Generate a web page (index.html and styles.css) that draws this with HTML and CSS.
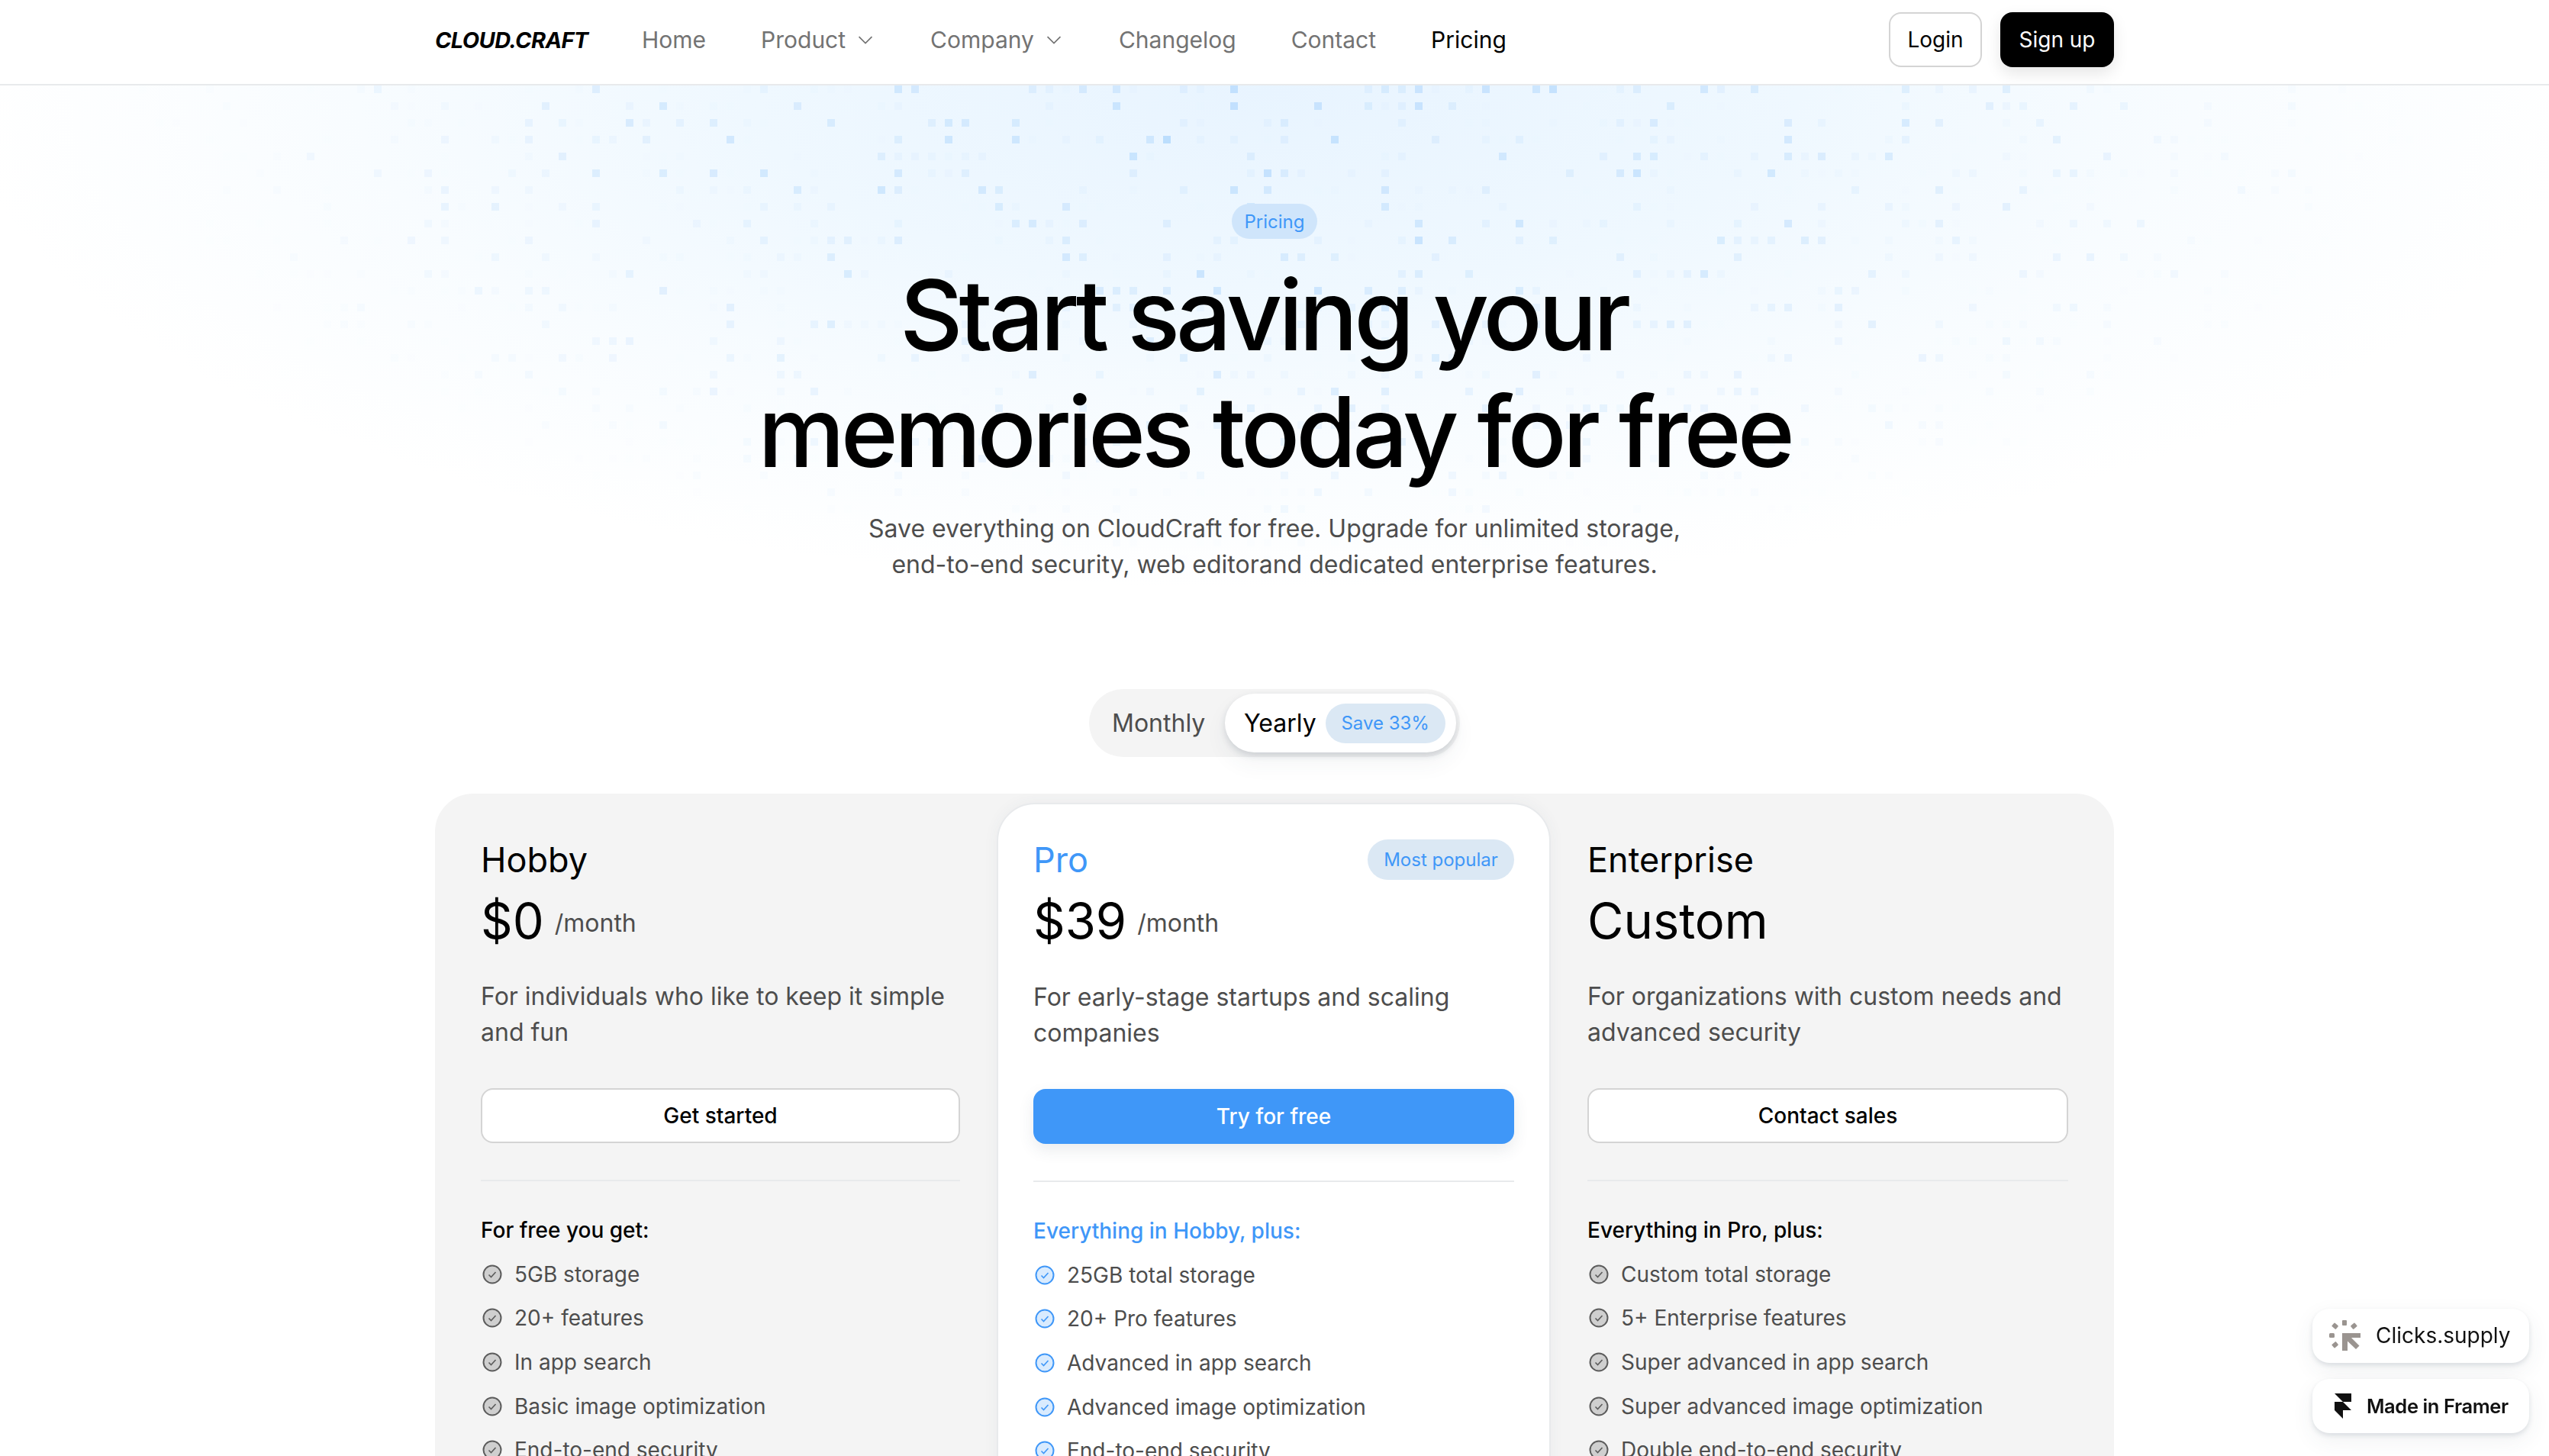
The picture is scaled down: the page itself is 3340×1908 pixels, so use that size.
FILE: index.html
```html
<!DOCTYPE html>
<html lang="en">
<head>
    <meta charset="UTF-8">
    <meta name="viewport" content="width=device-width, initial-scale=1.0">
    <title>CloudCraft Pricing</title>
    <link rel="stylesheet" href="styles.css">
</head>
<body>
    <header class="site-header">
        <div class="header-inner">
            <a href="#" class="logo">CLOUD.CRAFT</a>
            <nav class="nav-list">
                <a href="#">Home</a>
                <a href="#">Product <svg class="chev" viewBox="0 0 20 20"><path d="M3.500 7l6.500 6.500L16.500 7"/></svg></a>
                <a href="#">Company <svg class="chev" viewBox="0 0 20 20"><path d="M3.500 7l6.500 6.500L16.500 7"/></svg></a>
                <a href="#">Changelog</a>
                <a href="#">Contact</a>
                <a href="#" class="active">Pricing</a>
            </nav>
            <div class="auth-buttons">
                <button class="login-btn">Login</button>
                <button class="signup-btn">Sign up</button>
            </div>
        </div>
    </header>

    <main>
        <section class="hero">
            <div class="hero-dots"></div>
            <span class="pill hero-pill">Pricing</span>
            <h1>Start saving your <br>memories today for free</h1>
            <p>Save everything on CloudCraft for free. Upgrade for unlimited storage,<br>end-to-end security, web editorand dedicated enterprise features.</p>
            <div class="toggle">
                <span class="toggle-off">Monthly</span>
                <span class="toggle-on">Yearly <span class="pill save-pill">Save 33%</span></span>
            </div>
        </section>

        <section class="plans">
            <article class="plan plan-hobby">
                <h2>Hobby</h2>
                <div class="price"><strong>$0</strong> <span>/month</span></div>
                <p class="desc">For individuals who like to keep it simple and fun</p>
                <button class="plan-btn">Get started</button>
                <hr>
                <h3>For free you get:</h3>
                <ul>
                    <li><svg class="check" viewBox="0 0 26 26"><circle cx="13" cy="13" r="11.5"/><path d="M8.500 13.500l3 3 6-6.500"/></svg>5GB storage</li>
                    <li><svg class="check" viewBox="0 0 26 26"><circle cx="13" cy="13" r="11.5"/><path d="M8.500 13.500l3 3 6-6.500"/></svg>20+ features</li>
                    <li><svg class="check" viewBox="0 0 26 26"><circle cx="13" cy="13" r="11.5"/><path d="M8.500 13.500l3 3 6-6.500"/></svg>In app search</li>
                    <li><svg class="check" viewBox="0 0 26 26"><circle cx="13" cy="13" r="11.5"/><path d="M8.500 13.500l3 3 6-6.500"/></svg>Basic image optimization</li>
                    <li><svg class="check" viewBox="0 0 26 26"><circle cx="13" cy="13" r="11.5"/><path d="M8.500 13.500l3 3 6-6.500"/></svg>End-to-end security</li>
                </ul>
            </article>

            <article class="plan plan-pro">
                <div class="plan-top">
                    <h2>Pro</h2>
                    <span class="pill popular-pill">Most popular</span>
                </div>
                <div class="price"><strong>$39</strong> <span>/month</span></div>
                <p class="desc">For early-stage startups and scaling companies</p>
                <button class="plan-btn">Try for free</button>
                <hr>
                <h3>Everything in Hobby, plus:</h3>
                <ul>
                    <li><svg class="check" viewBox="0 0 26 26"><circle cx="13" cy="13" r="11.5"/><path d="M8.500 13.500l3 3 6-6.500"/></svg>25GB total storage</li>
                    <li><svg class="check" viewBox="0 0 26 26"><circle cx="13" cy="13" r="11.5"/><path d="M8.500 13.500l3 3 6-6.500"/></svg>20+ Pro features</li>
                    <li><svg class="check" viewBox="0 0 26 26"><circle cx="13" cy="13" r="11.5"/><path d="M8.500 13.500l3 3 6-6.500"/></svg>Advanced in app search</li>
                    <li><svg class="check" viewBox="0 0 26 26"><circle cx="13" cy="13" r="11.5"/><path d="M8.500 13.500l3 3 6-6.500"/></svg>Advanced image optimization</li>
                    <li><svg class="check" viewBox="0 0 26 26"><circle cx="13" cy="13" r="11.5"/><path d="M8.500 13.500l3 3 6-6.500"/></svg>End-to-end security</li>
                </ul>
            </article>

            <article class="plan plan-ent">
                <h2>Enterprise</h2>
                <div class="price"><strong>Custom</strong></div>
                <p class="desc">For organizations with custom needs and advanced security</p>
                <button class="plan-btn">Contact sales</button>
                <hr>
                <h3>Everything in Pro, plus:</h3>
                <ul>
                    <li><svg class="check" viewBox="0 0 26 26"><circle cx="13" cy="13" r="11.5"/><path d="M8.500 13.500l3 3 6-6.500"/></svg>Custom total storage</li>
                    <li><svg class="check" viewBox="0 0 26 26"><circle cx="13" cy="13" r="11.5"/><path d="M8.500 13.500l3 3 6-6.500"/></svg>5+ Enterprise features</li>
                    <li><svg class="check" viewBox="0 0 26 26"><circle cx="13" cy="13" r="11.5"/><path d="M8.500 13.500l3 3 6-6.500"/></svg>Super advanced in app search</li>
                    <li><svg class="check" viewBox="0 0 26 26"><circle cx="13" cy="13" r="11.5"/><path d="M8.500 13.500l3 3 6-6.500"/></svg>Super advanced image optimization</li>
                    <li><svg class="check" viewBox="0 0 26 26"><circle cx="13" cy="13" r="11.5"/><path d="M8.500 13.500l3 3 6-6.500"/></svg>Double end-to-end security</li>
                </ul>
            </article>
        </section>
    </main>

    <div class="badges">
        <a href="#" class="badge badge-clicks">
            <svg viewBox="0 0 41 40" width="41" height="40" fill="#9a9490">
                <path d="M17 17h24v6H29l10.500 10.500-4.500 4.500L24 27.500V40h-7z"/>
                <rect x="17" y="0" width="6" height="7" rx="1"/>
                <rect x="29" y="5" width="7" height="6" rx="1" transform="rotate(-40 32 8)"/>
                <rect x="4" y="5" width="7" height="6" rx="1" transform="rotate(40 8 8)"/>
                <rect x="0" y="17" width="7" height="6" rx="1.500"/>
                <rect x="4" y="29" width="7" height="6" rx="1" transform="rotate(-40 8 32)"/>
            </svg>
            Clicks.supply
        </a>
        <a href="#" class="badge badge-framer">
            <svg viewBox="0 0 16 24" width="22" height="33" fill="#111"><path d="M0 0h16v8H8zM0 8h8l8 8H8v8l-8-8z"/></svg>
            Made in Framer
        </a>
    </div>
    <script src="dots.js"></script>
</body>
</html>
```

FILE: styles.css
```css
html, body {
    height: 1908px;
    overflow: hidden;
}

body {
    font-family: Inter, "Liberation Sans", sans-serif;
    margin: 0;
    padding: 0;
    background-color: #fff;
    color: #000;
}

.site-header {
    height: 110px;
    border-bottom: 2px solid #e8eaec;
    background-color: #fff;
}

.header-inner {
    width: 2200px;
    height: 100%;
    box-sizing: border-box;
    padding-bottom: 6px;
    margin: 0 auto;
    display: flex;
    align-items: center;
}

.logo {
    font-size: 29px;
    font-weight: 700;
    font-style: italic;
    letter-spacing: -0.6px;
    color: #000;
    text-decoration: none;
    width: 271px;
}

.nav-list {
    display: flex;
    gap: 72px;
    flex: 1;
}

.nav-list a {
    color: #737373;
    text-decoration: none;
    font-size: 30px;
    display: flex;
    align-items: center;
    gap: 13px;
}

.nav-list a.active {
    color: #000;
}

.chev {
    width: 26px;
    height: 26px;
    fill: none;
    stroke: #737373;
    stroke-width: 1.3;
}

.auth-buttons {
    display: flex;
    gap: 24px;
}

.auth-buttons button {
    font-family: inherit;
    font-size: 28px;
    height: 72px;
    border-radius: 16px;
    cursor: pointer;
}

.login-btn {
    width: 122px;
    background-color: #fff;
    border: 2px solid #d4d4d4;
    color: #000;
}

.signup-btn {
    width: 149px;
    background-color: #000;
    border: none;
    color: #fff;
    box-shadow: 0 8px 20px rgba(0, 0, 0, 0.1);
}

.hero {
    position: relative;
    display: flex;
    flex-direction: column;
    align-items: center;
    height: 928px;
    padding-top: 155px;
    box-sizing: border-box;
    background: radial-gradient(ellipse 1720px 660px at 50% 0, #e8f4ff 0%, #eff8ff 40%, #f8fcff 70%, #fff 100%);
}

.hero-dots {
    position: absolute;
    top: 0;
    left: 0;
    width: 100%;
    height: 640px;
}

.pill {
    display: inline-flex;
    align-items: center;
    justify-content: center;
    background-color: #dbe8f4;
    color: #3f97f8;
    border-radius: 30px;
}

.hero-pill {
    position: relative;
    width: 112px;
    height: 46px;
    font-size: 24px;
    background-color: #cfe5fb;
}

h1 {
    position: relative;
    margin: 23px 0 0;
    font-size: 128px;
    line-height: 153px;
    font-weight: 500;
    letter-spacing: -5.1px;
    text-align: center;
    white-space: pre;
}

.hero p {
    position: relative;
    margin: 27px 0 0;
    font-size: 32px;
    line-height: 47px;
    color: #4d4d4d;
    text-align: center;
}

.toggle {
    position: relative;
    display: flex;
    align-items: center;
    justify-content: space-between;
    width: 486px;
    height: 89px;
    box-sizing: border-box;
    margin-top: 140px;
    padding: 0 5px 0 30px;
    background-color: #f4f4f4;
    border-radius: 45px;
    font-size: 32px;
}

.toggle-off {
    color: #4d4d4d;
}

.toggle-on {
    display: flex;
    align-items: center;
    gap: 12px;
    width: 303px;
    height: 77px;
    box-sizing: border-box;
    padding-left: 25px;
    background-color: #fff;
    border-radius: 40px;
    color: #000;
    box-shadow: 0 4px 8px rgba(50, 70, 90, 0.16), 0 14px 30px rgba(50, 70, 90, 0.06);
}

.save-pill {
    width: 157px;
    height: 52px;
    font-size: 24px;
}

.plans {
    display: flex;
    align-items: flex-start;
    width: 2200px;
    height: 1200px;
    margin: 0 auto;
    background-color: #f4f4f4;
    border-radius: 50px;
}

.plan {
    box-sizing: border-box;
    padding-top: 60px;
}

.plan-hobby {
    width: 736px;
    padding-left: 60px;
    padding-right: 48px;
}

.plan-pro {
    width: 726px;
    height: 1188px;
    margin-top: 12px;
    padding: 46px 46px 0;
    background-color: #fff;
    border: 2px solid #e8eaec;
    border-radius: 50px;
    box-shadow: 0 0 20px rgba(50, 70, 90, 0.05);
}

.plan-ent {
    width: 738px;
    padding-left: 48px;
    padding-right: 60px;
}

.plan-top {
    display: flex;
    justify-content: space-between;
    align-items: center;
}

.popular-pill {
    width: 192px;
    height: 53px;
    font-size: 24px;
    margin-top: -2px;
}

.plan h2 {
    margin: 0;
    font-size: 45px;
    line-height: 54px;
    font-weight: 400;
}

.plan-pro h2,
.plan-pro h3 {
    color: #3f97f8;
}

.price {
    margin-top: 12px;
    height: 80px;
    display: flex;
    align-items: center;
    gap: 14px;
}

.price strong {
    font-size: 65px;
    font-weight: 400;
}

.price span {
    font-size: 32px;
    color: #4d4d4d;
    margin-top: 6px;
}

.desc {
    margin: 36px 0 0;
    height: 94px;
    font-size: 32px;
    line-height: 47px;
    color: #4d4d4d;
}

.plan-pro .desc {
    margin-top: 37px;
}

.plan-btn {
    display: block;
    width: 100%;
    height: 72px;
    margin-top: 50px;
    font-family: inherit;
    font-size: 28px;
    font-weight: 500;
    background-color: #fff;
    color: #000;
    border: 2px solid #d4d4d4;
    border-radius: 16px;
    cursor: pointer;
}

.plan-pro .plan-btn {
    background-color: #3f97f8;
    color: #fff;
    border: none;
    box-shadow: 0 8px 20px rgba(50, 70, 90, 0.1);
}

.plan hr {
    margin: 48px 0 0;
    border: none;
    border-top: 2px solid #e8eaec;
}

.plan h3 {
    margin: 46px 0 0;
    font-size: 28px;
    line-height: 36px;
    font-weight: 500;
}

.plan ul {
    list-style: none;
    margin: 11px 0 0;
    padding: 0;
}

.plan li {
    display: flex;
    align-items: center;
    gap: 16px;
    height: 57.6px;
    font-size: 28px;
    color: #4d4d4d;
}

.check {
    width: 26px;
    height: 26px;
    margin-left: 2px;
    flex: none;
    fill: #cfcfcf;
    stroke: #5c5c5c;
    stroke-width: 2;
}

.check path {
    fill: none;
    stroke-width: 1.6;
}

.plan-pro .check {
    fill: #d9ebfe;
    stroke: #3f97f8;
}

.badges {
    position: fixed;
    right: 26px;
    bottom: 30px;
    display: flex;
    flex-direction: column;
    gap: 21px;
}

.badge {
    display: flex;
    align-items: center;
    width: 284px;
    height: 71px;
    box-sizing: border-box;
    background-color: #fff;
    border-radius: 22px;
    color: #111;
    text-decoration: none;
    box-shadow: 0 3px 6px rgba(50, 70, 90, 0.14), 0 10px 30px rgba(50, 70, 90, 0.07);
}

.badge-clicks {
    padding-left: 22px;
    gap: 20px;
    font-size: 28px;
    padding-bottom: 2px;
}

.badge-framer {
    padding-left: 29px;
    gap: 20px;
    font-size: 25.5px;
    font-weight: 600;
    letter-spacing: -0.4px;
}
```

FILE: dots.js
```js
// scatter the faint dot grid behind the hero
document.addEventListener('DOMContentLoaded', () => {
    const holder = document.querySelector('.hero-dots');
    const ns = 'http://www.w3.org/2000/svg';
    const svg = document.createElementNS(ns, 'svg');
    svg.setAttribute('width', '3340');
    svg.setAttribute('height', '640');

    let seed = 7;
    function rand() {
        seed = (seed * 16807) % 2147483647;
        return seed / 2147483647;
    }

    for (let row = 0; row < 30; row++) {
        for (let col = 0; col < 152; col++) {
            const x = col * 22 + 6;
            const y = row * 22;
            const dx = (x - 1670) / 1500;
            const dy = y / 640;
            const fade = 1 - Math.sqrt(dx * dx + dy * dy);
            if (fade <= 0 || rand() > 0.5) continue;
            const dot = document.createElementNS(ns, 'rect');
            dot.setAttribute('x', x);
            dot.setAttribute('y', y);
            dot.setAttribute('width', 10);
            dot.setAttribute('height', 10);
            dot.setAttribute('fill', '#b4d9fd');
            const strength = rand();
            dot.setAttribute('opacity', (fade * strength * strength * strength).toFixed(2));
            svg.appendChild(dot);
        }
    }
    holder.appendChild(svg);
});
```
